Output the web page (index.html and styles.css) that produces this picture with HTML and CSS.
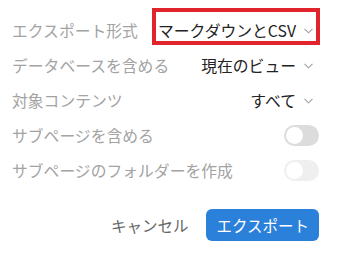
FILE: index.html
```html
<!DOCTYPE html>
<html lang="ja">
<head>
    <meta charset="UTF-8">
    <meta name="viewport" content="width=device-width, initial-scale=1.0">
    <title>エクスポート</title>
    <link rel="stylesheet" href="styles.css">
</head>
<body>
    <div class="export-panel">
        <div class="row">
            <span class="label">エクスポート形式</span>
            <span class="select highlight">マークダウンとCSV
                <svg class="chevron" width="9" height="6" viewBox="0 0 9 6"><path d="M0.5 0.8 L4.5 4.8 L8.5 0.8" /></svg>
            </span>
        </div>
        <div class="row">
            <span class="label">データベースを含める</span>
            <span class="select">現在のビュー
                <svg class="chevron" width="9" height="6" viewBox="0 0 9 6"><path d="M0.5 0.8 L4.5 4.8 L8.5 0.8" /></svg>
            </span>
        </div>
        <div class="row">
            <span class="label">対象コンテンツ</span>
            <span class="select">すべて
                <svg class="chevron" width="9" height="6" viewBox="0 0 9 6"><path d="M0.5 0.8 L4.5 4.8 L8.5 0.8" /></svg>
            </span>
        </div>
        <div class="row">
            <span class="label">サブページを含める</span>
            <span class="toggle"><span class="knob"></span></span>
        </div>
        <div class="row">
            <span class="label">サブページのフォルダーを作成</span>
            <span class="toggle disabled"><span class="knob"></span></span>
        </div>

        <div class="actions">
            <button class="btn cancel-btn">キャンセル</button>
            <button class="btn export-btn">エクスポート</button>
        </div>
    </div>
</body>
</html>
```

FILE: styles.css
```css
* {
    margin: 0;
    padding: 0;
    box-sizing: border-box;
}

body {
    background: white;
    font-family: "Noto Sans CJK JP", "Noto Sans", sans-serif;
    font-size: 15.8px;
}

.export-panel {
    width: 340px;
    padding: 13px 21px 0 12px;
}

.row {
    display: flex;
    align-items: center;
    justify-content: space-between;
    height: 35px;
}

.label {
    color: #a3a3a3;
    line-height: 22px;
}

.select {
    display: flex;
    align-items: center;
    gap: 8px;
    color: #222;
    line-height: 22px;
    margin-right: 6px;
}

.chevron {
    fill: none;
    stroke: #a0a0a0;
    stroke-width: 1.1;
}

.highlight {
    position: relative;
}

.highlight::after {
    content: "";
    position: absolute;
    top: -12px;
    bottom: -3px;
    left: -6px;
    right: -7px;
    border: 4px solid #e1232b;
}

.toggle {
    width: 35px;
    height: 21px;
    border-radius: 11px;
    background: #dcdcdc;
    display: flex;
    align-items: center;
    padding-left: 2px;
}

.toggle .knob {
    width: 17px;
    height: 17px;
    border-radius: 50%;
    background: white;
}

.toggle.disabled {
    background: #efefef;
}

.actions {
    display: flex;
    justify-content: flex-end;
    align-items: center;
    gap: 18px;
    margin-top: 21px;
}

.btn {
    font-family: inherit;
    font-size: 15.5px;
    border: none;
    background: none;
    height: 32px;
    cursor: pointer;
}

.cancel-btn {
    color: #666;
}

.export-btn {
    background: #2b80d9;
    color: white;
    border-radius: 6px;
    padding: 0 10px;
}
```
